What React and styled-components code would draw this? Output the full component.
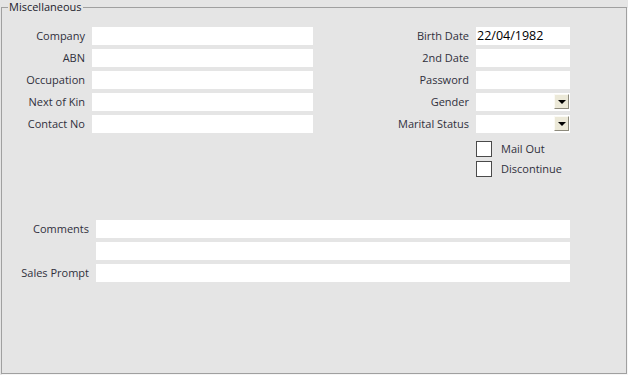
import React from "react";
import styled, { createGlobalStyle } from "styled-components";

const GlobalStyle = createGlobalStyle`
  html, body {
    margin: 0;
    padding: 0;
    background: #e5e5e5;
    font-family: "Open Sans", "Noto Sans", "DejaVu Sans", sans-serif;
  }
  #root { width: 628px; height: 375px; overflow: hidden; }
`;

const Frame = styled.fieldset`
  box-sizing: border-box;
  margin: 0 0 0 1px;
  width: 626px;
  height: 374px;
  padding: 13px 0 0 0;
  border: 1px solid #a0a0a0;
  box-shadow: 1px 1px 0 #f6f6f6;
  min-inline-size: 0;
`;

const Legend = styled.legend`
  margin-left: 6px;
  padding: 0 1px;
  font-size: 11px;
  line-height: 14px;
  color: #1c1c2c;
`;

const TopSection = styled.div`
  display: flex;
  align-items: flex-start;
  gap: 56px;
`;

const FieldGrid = styled.div`
  display: grid;
  grid-template-columns: ${(p) => p.$label}px ${(p) => p.$input}px;
  column-gap: 7px;
  row-gap: 4px;
  grid-auto-rows: auto;
`;

const Label = styled.label`
  justify-self: end;
  align-self: center;
  font-size: 11px;
  line-height: 14px;
  color: #30303c;
  white-space: nowrap;
`;

const Input = styled.div`
  box-sizing: border-box;
  height: 18px;
  background: #ffffff;
  position: relative;
  font-size: 12.5px;
  line-height: 18px;
  color: #000;
  padding-left: 1px;
  white-space: nowrap;
`;

const DropButton = styled.div`
  position: absolute;
  right: 1px;
  top: 1px;
  box-sizing: border-box;
  width: 15px;
  height: 15px;
  background: #ece9d8;
  border-top: 1px solid #fbfaf5;
  border-left: 1px solid #fbfaf5;
  border-right: 1px solid #8d8a7c;
  border-bottom: 1px solid #8d8a7c;
  display: flex;
  align-items: center;
  justify-content: center;
`;

const Arrow = styled.span`
  width: 0;
  height: 0;
  border-left: 4px solid transparent;
  border-right: 4px solid transparent;
  border-top: 4px solid #000;
  margin-top: 1px;
`;

const CheckList = styled.div`
  grid-column: 2;
  display: flex;
  flex-direction: column;
  gap: 4px;
  margin-top: 4px;
`;

const CheckRow = styled.div`
  display: flex;
  align-items: center;
  gap: 9px;
  height: 16px;
`;

const Box = styled.span`
  box-sizing: border-box;
  width: 16px;
  height: 16px;
  background: #fff;
  border: 1px solid #4a4a4a;
`;

const CheckText = styled.span`
  font-size: 11px;
  line-height: 14px;
  color: #30303c;
`;

const BottomSection = styled.div`
  margin-top: 43px;
`;

const Spacer = styled.span``;

const Dropdown = () => (
  <Input>
    <DropButton>
      <Arrow />
    </DropButton>
  </Input>
);

export default function App() {
  return (
    <>
      <GlobalStyle />
      <Frame>
        <Legend>Miscellaneous</Legend>
        <TopSection>
          <FieldGrid $label={83} $input={221}>
            <Label>Company</Label>
            <Input />
            <Label>ABN</Label>
            <Input />
            <Label>Occupation</Label>
            <Input />
            <Label>Next of Kin</Label>
            <Input />
            <Label>Contact No</Label>
            <Input />
          </FieldGrid>
          <FieldGrid $label={100} $input={94}>
            <Label>Birth Date</Label>
            <Input>22/04/1982</Input>
            <Label>2nd Date</Label>
            <Input />
            <Label>Password</Label>
            <Input />
            <Label>Gender</Label>
            <Dropdown />
            <Label>Marital Status</Label>
            <Dropdown />
            <CheckList>
              <CheckRow>
                <Box />
                <CheckText>Mail Out</CheckText>
              </CheckRow>
              <CheckRow>
                <Box />
                <CheckText>Discontinue</CheckText>
              </CheckRow>
            </CheckList>
          </FieldGrid>
        </TopSection>
        <BottomSection>
          <FieldGrid $label={87} $input={474}>
            <Label>Comments</Label>
            <Input />
            <Spacer />
            <Input />
            <Label>Sales Prompt</Label>
            <Input />
          </FieldGrid>
        </BottomSection>
      </Frame>
    </>
  );
}
